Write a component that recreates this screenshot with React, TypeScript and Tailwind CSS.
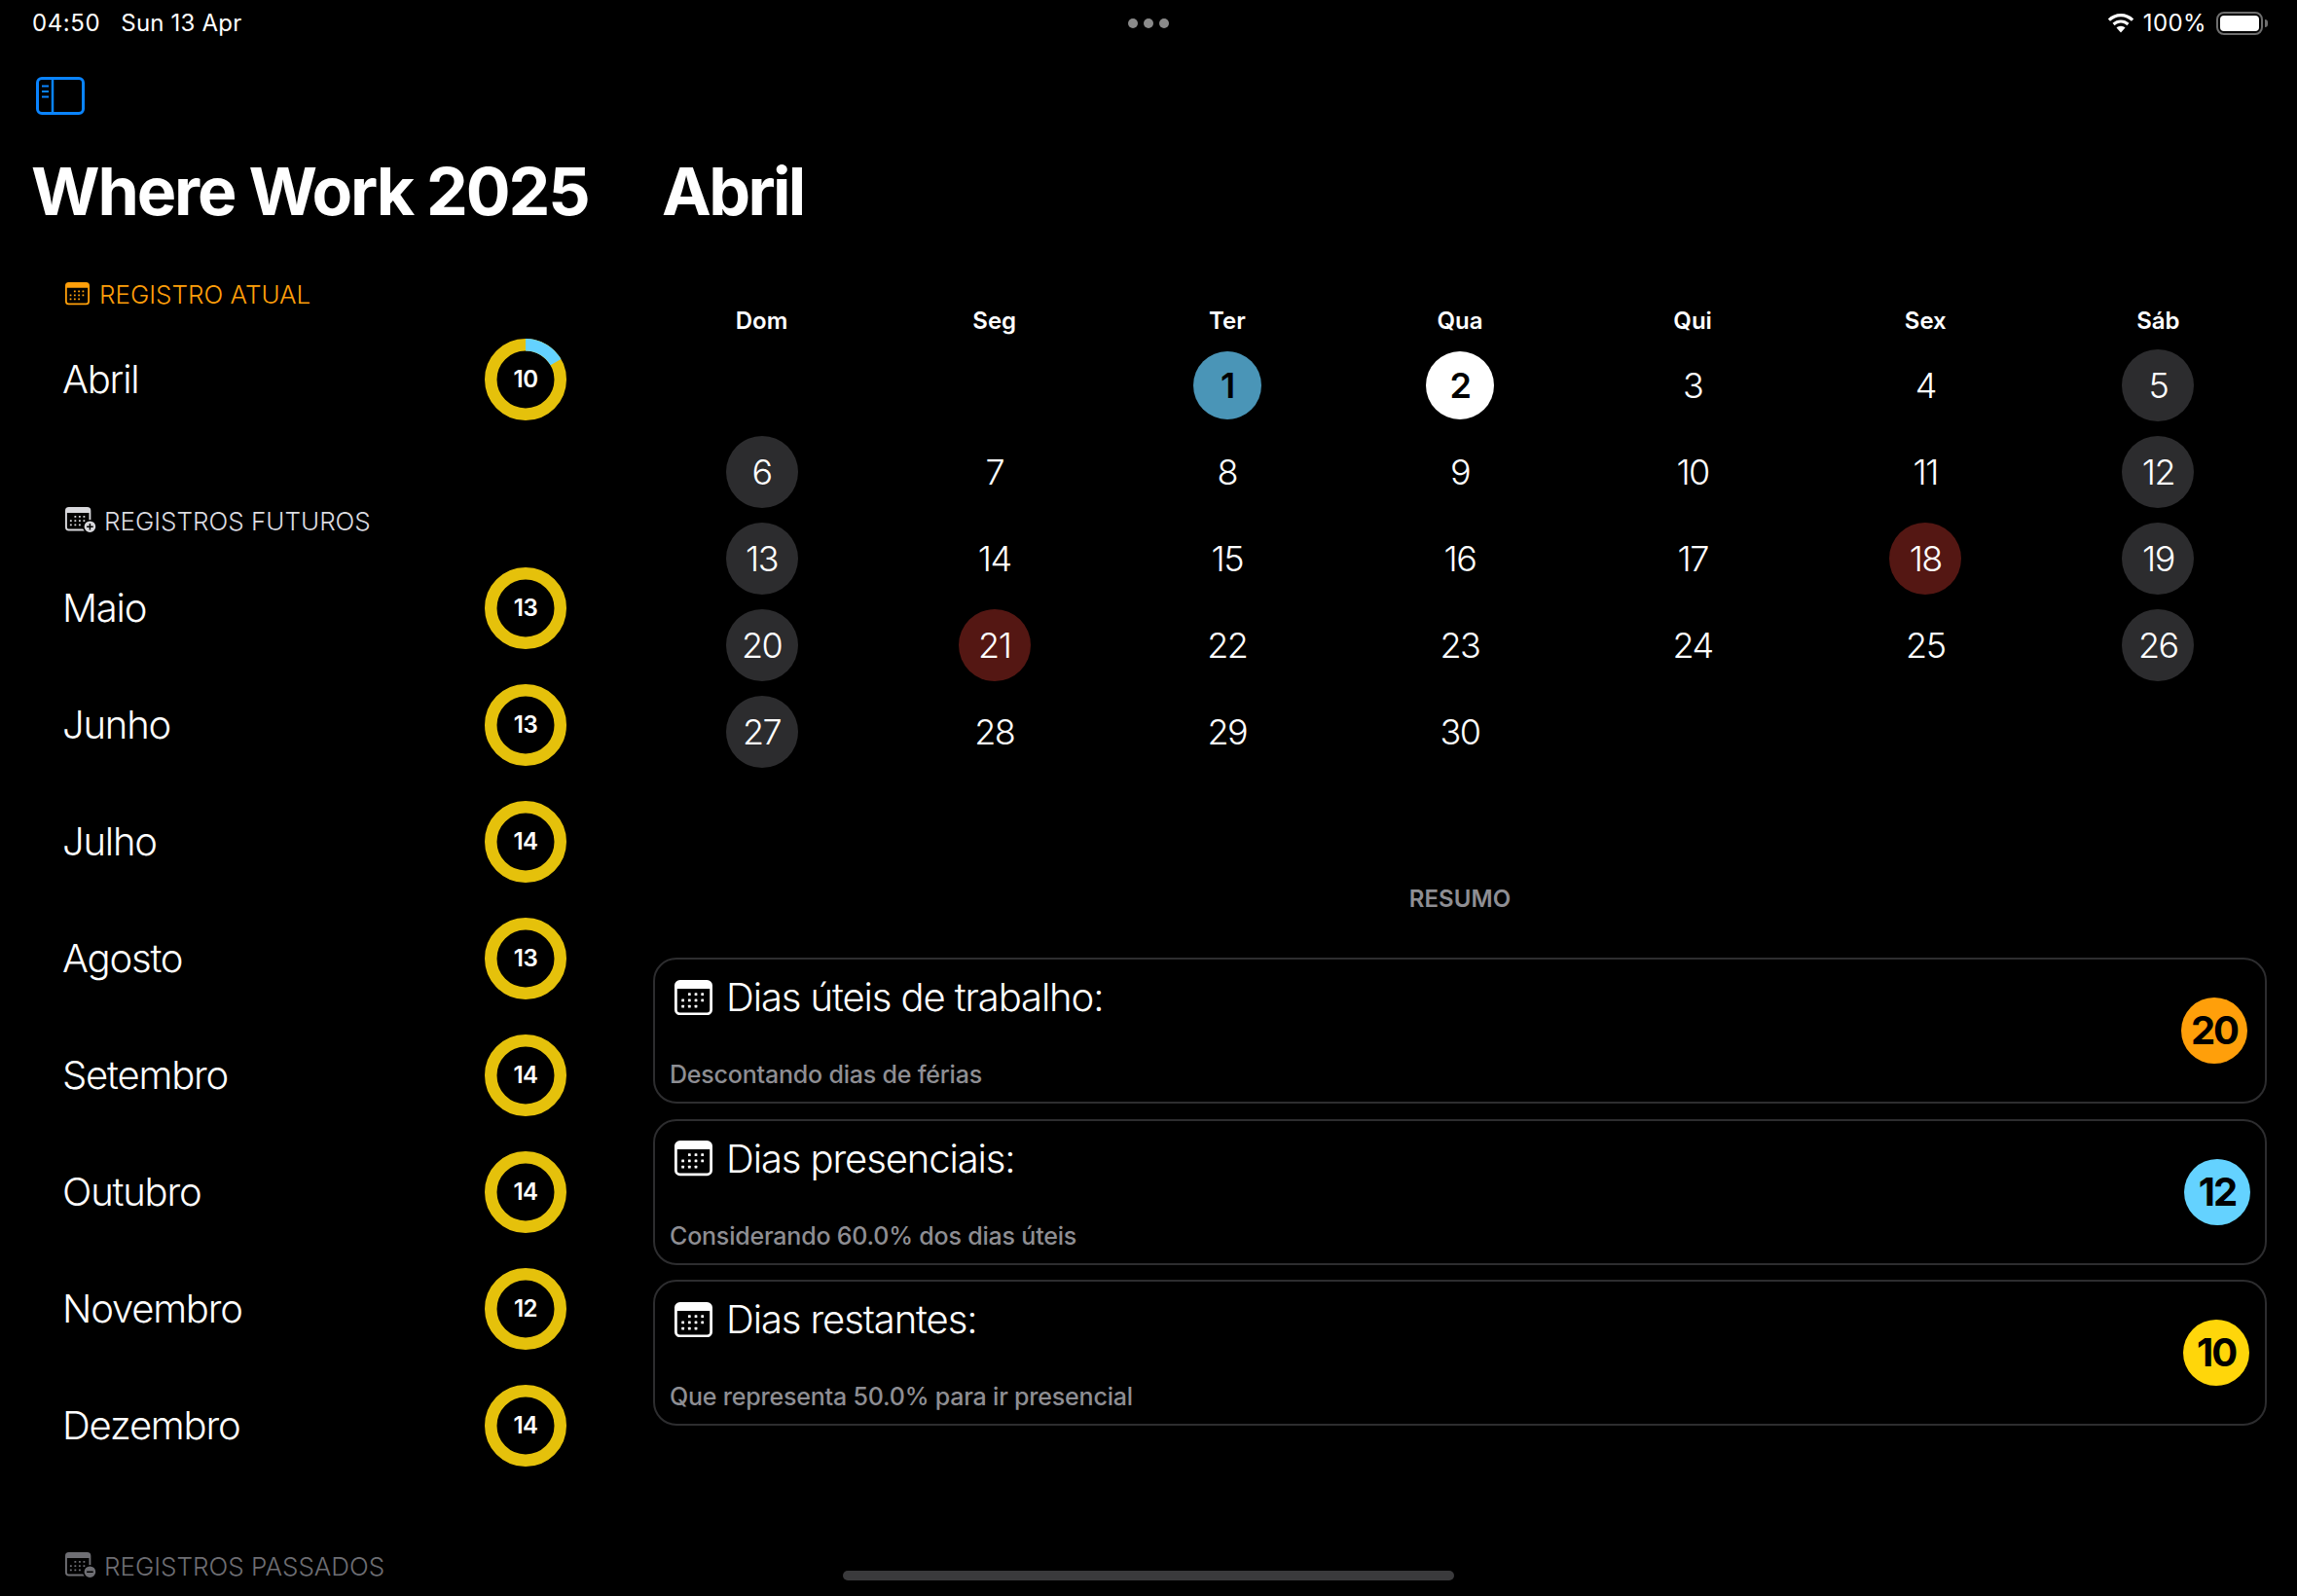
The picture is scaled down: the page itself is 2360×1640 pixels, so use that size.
import React from "react";

function CalIcon({ color, width, badge, badgeInk = "#000" }: { color: string; width: number; badge?: "plus" | "minus"; badgeInk?: string }) {
  const dots: [number, number][] = [];
  [11, 15.8, 20.6].forEach((x) => dots.push([x, 10.5]));
  [6.2, 11, 15.8, 20.6].forEach((x) => dots.push([x, 15]));
  [6.2, 11, 15.8].forEach((x) => dots.push([x, 19.5]));
  const vbW = badge ? 34 : 28;
  const vbH = badge ? 30 : 26;
  return (
    <svg width={width} height={(width * vbH) / vbW} viewBox={`0 0 ${vbW} ${vbH}`} className="shrink-0" fill="none">
      <rect x="1" y="1" width="26" height="24" rx="3" stroke={color} strokeWidth="2" />
      <path d="M1 6.500V4a3 3 0 0 1 3-3h20a3 3 0 0 1 3 3v2.500z" fill={color} />
      {dots.map(([x, y], i) => (
        <rect key={i} x={x - 1} y={y - 1} width="2" height="2" rx="0.4" fill={color} />
      ))}
      {badge && (
        <>
          <circle cx="27" cy="21.500" r="7" fill={color} stroke="#000" strokeWidth="1.6" />
          <path d={badge === "plus" ? "M23.500 21.500h7M27 18v7" : "M23.500 21.500h7"} stroke={badgeInk} strokeWidth="1.6" />
        </>
      )}
    </svg>
  );
}

function Ring({ n, part }: { n: number; part?: number }) {
  const r = 35.75;
  const c = 2 * Math.PI * r;
  return (
    <div className="relative w-[84px] h-[84px] shrink-0 flex items-center justify-center">
      <svg width="84" height="84" viewBox="0 0 84 84" className="absolute inset-0 -rotate-90">
        <circle cx="42" cy="42" r={r} fill="none" stroke="#e5c10b" strokeWidth="12.5" />
        {part ? (
          <circle cx="42" cy="42" r={r} fill="none" stroke="#64d2ff" strokeWidth="12.5" strokeDasharray={`${c * part} ${c}`} />
        ) : null}
      </svg>
      <span className="relative text-[24px] font-semibold text-white tracking-[-0.5px]">{n}</span>
    </div>
  );
}

function MonthRow({ name, n, part }: { name: string; n: number; part?: number }) {
  return (
    <div className="h-[120px] flex items-center justify-between pl-[64px] pr-[78px]">
      <span className="text-[40px] text-white tracking-[-1.2px] font-light">{name}</span>
      <Ring n={n} part={part} />
    </div>
  );
}

const weekDays = ["Dom", "Seg", "Ter", "Qua", "Qui", "Sex", "Sáb"];
const cells: (number | null)[] = [null, null, ...Array.from({ length: 30 }, (_, i) => i + 1)];

function Day({ d }: { d: number | null }) {
  if (d === null) return <div className="h-[89px]" />;
  const idx = d + 1;
  const weekend = idx % 7 === 0 || idx % 7 === 6;
  let cls = "w-[74px] h-[74px] text-white font-light";
  if (d === 1) cls = "w-[70px] h-[70px] bg-[#4a95b7] text-black font-semibold";
  else if (d === 2) cls = "w-[70px] h-[70px] bg-white text-black font-semibold";
  else if (d === 18 || d === 21) cls = "w-[74px] h-[74px] bg-[#541713] text-white font-light";
  else if (weekend) cls = "w-[74px] h-[74px] bg-[#2c2c2e] text-white font-light";
  return (
    <div className="h-[89px] flex items-center justify-center">
      <div className={`${cls} rounded-full flex items-center justify-center text-[36px] tracking-[-1.5px]`}>{d}</div>
    </div>
  );
}

function Card({ title, sub, n, bg, mr }: { title: string; sub: string; n: number; bg: string; mr: string }) {
  return (
    <div className="h-[150px] border-2 border-[#2d2d2f] rounded-[24px] flex items-center justify-between pl-[15px]">
      <div className="flex flex-col h-full pt-[16px]">
        <div className="flex items-center gap-[14px] pl-[5px] h-[46px]">
          <CalIcon color="#ffffff" width={39} />
          <span className="text-[40px] text-white font-light tracking-[-1.1px]">{title}</span>
        </div>
        <span className="mt-[38px] text-[25px] font-medium text-[#8e8e93] tracking-[-0.2px]">{sub}</span>
      </div>
      <div className={`${bg} ${mr} w-[68px] h-[68px] rounded-full flex items-center justify-center text-[40px] font-bold text-black tracking-[-2px]`}>{n}</div>
    </div>
  );
}

export default function App() {
  return (
    <div className="relative w-[2360px] h-[1640px] bg-black overflow-hidden flex flex-col" style={{ fontFamily: "Inter, 'Liberation Sans', sans-serif" }}>
      <div className="h-[48px] shrink-0 relative flex items-center justify-between pl-[33px] pr-[30px] text-white text-[24px]">
        <div className="flex gap-[21px]">
          <span className="tracking-[0.6px]">04:50</span>
          <span className="tracking-[0.2px]">Sun 13 Apr</span>
        </div>
        <div className="absolute left-[1159px] top-[19px] flex gap-[6px]">
          <div className="w-[10px] h-[10px] rounded-full bg-[#8a8a8a]" />
          <div className="w-[10px] h-[10px] rounded-full bg-[#8a8a8a]" />
          <div className="w-[10px] h-[10px] rounded-full bg-[#8a8a8a]" />
        </div>
        <div className="flex items-center gap-[9px]">
          <svg width="28" height="20" viewBox="0 0 28 20" fill="#fff">
            <path d="M14 0C9 0 4.300 2 .8 5.400L3 7.800C6 4.900 9.800 3.200 14 3.200s8 1.700 11 4.600l2.200-2.400C23.700 2 19 0 14 0z" />
            <path d="M14 6.400c-3.200 0-6.200 1.200-8.500 3.400l2.200 2.400c1.700-1.600 3.900-2.600 6.300-2.600s4.600 1 6.300 2.600l2.200-2.400C20.200 7.600 17.200 6.400 14 6.400z" />
            <path d="M14 12.800c-1.700 0-3.300.7-4.500 1.800L14 19.600l4.500-5c-1.200-1.100-2.800-1.800-4.500-1.800z" />
          </svg>
          <span className="tracking-[0.4px]">100%</span>
          <div className="flex items-center gap-[2px] ml-[1px]">
            <div className="w-[48px] h-[24px] rounded-[8px] border-2 border-[#6e6e6e] p-[2px]">
              <div className="w-full h-full bg-white rounded-[4px]" />
            </div>
            <div className="w-[3px] h-[8px] bg-[#6e6e6e] rounded-r-full" />
          </div>
        </div>
      </div>

      <div className="flex flex-1 min-h-0">
        <aside className="w-[660px] shrink-0 flex flex-col">
          <div className="pl-[37px] pt-[31px]">
            <svg width="50" height="39" viewBox="0 0 50 39" fill="none">
              <rect x="1.500" y="1.500" width="47" height="36" rx="4.500" stroke="#0a84ff" strokeWidth="3" />
              <path d="M17 1.500v36" stroke="#0a84ff" strokeWidth="2.500" />
              <path d="M6 9.500h7M6 15h7M6 20.500h7" stroke="#0a84ff" strokeWidth="2" />
            </svg>
          </div>
          <h1 className="pl-[32px] mt-[37px] text-[68px] leading-[82px] font-bold text-white tracking-[-2.1px] whitespace-nowrap">Where Work 2025</h1>
          <div className="pl-[67px] mt-[50px] flex items-center gap-[10px] h-[30px] text-[26px] text-[#ff9f0a] font-light">
            <CalIcon color="#ff9f0a" width={25} />
            <span>REGISTRO ATUAL</span>
          </div>
          <div className="mt-[13px]">
            <MonthRow name="Abril" n={10} part={1 / 6} />
          </div>
          <div className="pl-[67px] mt-[70px] flex items-center gap-[8px] h-[30px] text-[26px] text-[#dcdce0] font-light">
            <CalIcon color="#d8d8dc" width={32} badge="plus" />
            <span>REGISTROS FUTUROS</span>
          </div>
          <div className="mt-[15px]">
            {[["Maio", 13], ["Junho", 13], ["Julho", 14], ["Agosto", 13], ["Setembro", 14], ["Outubro", 14], ["Novembro", 12], ["Dezembro", 14]].map(([m, n]) => (
              <MonthRow key={m as string} name={m as string} n={n as number} />
            ))}
          </div>
          <div className="pl-[67px] mt-[69px] flex items-center gap-[8px] h-[30px] text-[26px] text-[#6e6e73] font-light">
            <CalIcon color="#6e6e73" width={32} badge="minus" />
            <span>REGISTROS PASSADOS</span>
          </div>
        </aside>

        <main className="flex-1 min-w-0 flex flex-col pr-[31px] pl-[11px]">
          <h2 className="pl-[9px] pt-[107px] text-[68px] leading-[82px] font-bold text-white tracking-[-2.6px]">Abril</h2>
          <div className="grid grid-cols-7 mt-[75px] -mx-[8px]">
            {weekDays.map((w) => (
              <div key={w} className="h-[36px] flex items-center justify-center text-[24px] font-semibold text-white">{w}</div>
            ))}
          </div>
          <div className="grid grid-cols-7 mt-[3px] -mx-[8px]">
            {cells.map((d, i) => (
              <Day key={i} d={d} />
            ))}
          </div>
          <div className="mt-[110px] text-center text-[24px] font-semibold text-[#8e8e93] tracking-[0.1px]">RESUMO</div>
          <div className="mt-[42px] flex flex-col gap-[15.5px]">
            <Card title="Dias úteis de trabalho:" sub="Descontando dias de férias" n={20} bg="bg-[#ff9f0a]" mr="mr-[18px]" />
            <Card title="Dias presenciais:" sub="Considerando 60.0% dos dias úteis" n={12} bg="bg-[#64d2ff]" mr="mr-[15px]" />
            <Card title="Dias restantes:" sub="Que representa 50.0% para ir presencial" n={10} bg="bg-[#ffd60a]" mr="mr-[16px]" />
          </div>
        </main>
      </div>

      <div className="absolute left-[866px] bottom-[16px] w-[628px] h-[10px] rounded-full bg-[#3a3a3c]" />
    </div>
  );
}
